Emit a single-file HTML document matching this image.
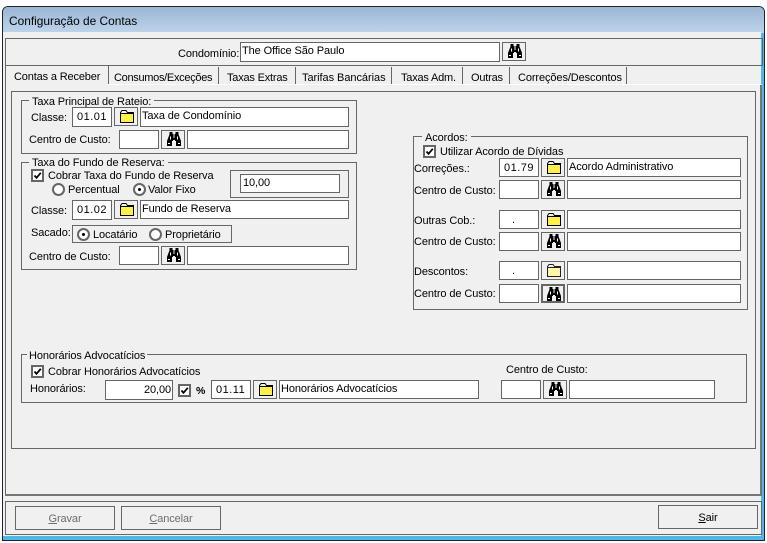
<!DOCTYPE html>
<html lang="pt"><head><meta charset="utf-8"><title>Configuração de Contas</title>
<style>
html,body{margin:0;padding:0;background:#fff;width:767px;height:543px;overflow:hidden}
body{position:relative;font:11px/14px "Liberation Sans",sans-serif;letter-spacing:-.1px;color:#000}
div,span,svg{position:absolute;box-sizing:border-box}
.t{white-space:nowrap;transform:translateY(1px)}
.b{border:1px solid #666}
.i{border:1px solid #666;background:#fff;padding:1px 0 0 1px;white-space:nowrap;line-height:14px}
.n{padding:2px 0 0 4px;letter-spacing:.5px}
.c{border:2px solid #666;background:#fff;width:13px;height:13px}
.c svg{left:0;top:0}
.r{width:13px;height:13px;border-radius:50%;border:2px solid #666;background:#fff}
.r.on:after{content:"";position:absolute;left:3px;top:3px;width:3px;height:3px;background:#000;border-radius:50%}
.btn{border:1px solid #666;background:#f0f0f0;width:24px;height:19px}
.btn svg{left:4px;top:1px}
.g{background:#f0f0f0;padding:0 3px;line-height:12px;white-space:nowrap}
.bt{white-space:nowrap;text-align:center;line-height:24px;border:1px solid #666}
</style></head><body>
<svg width="0" height="0" style="left:0;top:0"><defs>
<symbol id="f" viewBox="0 0 16 14"><path d="M1.5 13.5V3.5L3 1.5H7L8.5 3.5H14.5V13.5Z" fill="#f0f0f0" stroke="#000"/><rect x="2" y="5" width="12" height="8" fill="#ffef4a"/><path d="M2 4.5H14" stroke="#000"/></symbol>
<symbol id="p" viewBox="0 0 16 14"><path d="M1.5 13.5V3.5L3 1.5H7L8.5 3.5H14.5V13.5Z" fill="#f0f0f0" stroke="#222"/><rect x="2" y="5" width="12" height="8" fill="#fff6a8"/><path d="M2 4.5H14" stroke="#222"/></symbol>
<symbol id="k" viewBox="0 0 16 14"><path d="M3.5 0H6.5V2H7.5V6H8.5V2H9.5V0H12.5V2.5L13.5 5L15 9V14H10V9H9V8H7V9H6V14H1V9L2.5 5L3.5 2.5Z" fill="#000"/><path d="M4.5 4.5V7.5M11.5 4.5V7.5" stroke="#fff"/><rect x="2" y="11" width="2" height="1" fill="#fff"/><rect x="12" y="11" width="2" height="1" fill="#fff"/></symbol>
<symbol id="v" viewBox="0 0 9 9"><path d="M1.5 4.5L3.5 6.8L7.8 1.8" fill="none" stroke="#000" stroke-width="1.8"/></symbol>
</defs></svg>

<!-- window -->
<div style="left:2px;top:6px;width:763px;height:535px;border:1px solid #1c2630;border-radius:6px 6px 0 0;background:#f0f0f0;overflow:hidden">
<div style="left:0;top:0;width:761px;height:26px;background:linear-gradient(#9bb6d4,#bdd4ea)"></div>
<div style="left:0;top:26px;width:3px;height:507px;background:#bdd7ec"></div>
<div style="left:758px;top:26px;width:3px;height:507px;background:#4fb8e8"></div>
<div style="left:0;top:529px;width:761px;height:4px;background:#4fb8e8"></div>
</div>
<div style="left:3px;top:32px;width:758px;height:504px;background:#f0f0f0"></div>
<div class="t" style="left:9px;top:13px;font-size:11.9px;letter-spacing:0">Configuração de Contas</div>

<!-- top panel -->
<div style="left:5px;top:38px;width:758px;height:28px;border:1px solid #666"></div>
<div class="t" style="left:178px;top:46px">Condomínio:</div>
<div class="i" style="left:240px;top:42px;width:260px;height:20px">The Office São Paulo</div>
<div class="btn" style="left:502px;top:42px"><svg width="16" height="14"><use href="#k"/></svg></div>

<!-- page frame -->
<div style="left:5px;top:66px;width:1px;height:429px;background:#666"></div>
<div style="left:760px;top:84px;width:2px;height:411px;background:#777"></div>
<div style="left:5px;top:494px;width:757px;height:2px;background:#777"></div>
<div style="left:108px;top:84px;width:654px;height:1px;background:#fff"></div>

<!-- tabs -->
<div class="t" style="left:14px;top:69px;letter-spacing:-.15px">Contas a Receber</div>
<div class="t" style="left:114px;top:70px;letter-spacing:-.3px">Consumos/Exceções</div>
<div class="t" style="left:227px;top:70px;letter-spacing:-.2px">Taxas Extras</div>
<div class="t" style="left:302px;top:70px;letter-spacing:-.05px">Tarifas Bancárias</div>
<div class="t" style="left:401px;top:70px;letter-spacing:-.2px">Taxas Adm.</div>
<div class="t" style="left:471px;top:70px;letter-spacing:-.2px">Outras</div>
<div class="t" style="left:518px;top:70px;letter-spacing:-.1px">Correções/Descontos</div>
<div style="left:108px;top:66px;width:1px;height:18px;background:#666"></div>
<div style="left:218px;top:67px;width:1px;height:17px;background:#666"></div>
<div style="left:295px;top:67px;width:1px;height:17px;background:#666"></div>
<div style="left:391px;top:67px;width:1px;height:17px;background:#666"></div>
<div style="left:462px;top:67px;width:1px;height:17px;background:#666"></div>
<div style="left:509px;top:67px;width:1px;height:17px;background:#666"></div>
<div style="left:626px;top:67px;width:1px;height:17px;background:#666"></div>

<!-- tab content -->
<div class="b" style="left:11px;top:91px;width:745px;height:358px"></div>

<!-- Taxa Principal -->
<div class="b" style="left:21px;top:100px;width:336px;height:54px"></div>
<div class="g" style="left:29px;top:96px">Taxa Principal de Rateio:</div>
<div class="t" style="left:31px;top:110px">Classe:</div>
<div class="i n" style="left:72px;top:107px;width:40px;height:20px">01.01</div>
<div class="btn" style="left:114px;top:107px"><svg width="16" height="14"><use href="#f"/></svg></div>
<div class="i" style="left:140px;top:107px;width:209px;height:20px">Taxa de Condomínio</div>
<div class="t" style="left:29px;top:132px">Centro de Custo:</div>
<div class="i" style="left:119px;top:130px;width:40px;height:19px"></div>
<div class="btn" style="left:161px;top:130px"><svg width="16" height="14"><use href="#k"/></svg></div>
<div class="i" style="left:187px;top:130px;width:162px;height:19px"></div>

<!-- Fundo de Reserva -->
<div class="b" style="left:21px;top:162px;width:336px;height:108px"></div>
<div class="g" style="left:29px;top:157px">Taxa do Fundo de Reserva:</div>
<div class="c" style="left:31px;top:169px"><svg width="9" height="9"><use href="#v"/></svg></div>
<div class="t" style="left:48px;top:168px">Cobrar Taxa do Fundo de Reserva</div>
<div class="r" style="left:52px;top:183px"></div>
<div class="t" style="left:68px;top:182px">Percentual</div>
<div class="r on" style="left:133px;top:183px"></div>
<div class="t" style="left:148px;top:182px">Valor Fixo</div>
<div class="b" style="left:230px;top:170px;width:119px;height:28px"></div>
<div class="i" style="left:240px;top:174px;width:100px;height:19px;padding-left:2px">10,00</div>
<div class="t" style="left:31px;top:203px">Classe:</div>
<div class="i n" style="left:72px;top:200px;width:40px;height:20px">01.02</div>
<div class="btn" style="left:114px;top:200px"><svg width="16" height="14"><use href="#f"/></svg></div>
<div class="i" style="left:140px;top:200px;width:209px;height:19px">Fundo de Reserva</div>
<div class="t" style="left:31px;top:225px">Sacado:</div>
<div class="b" style="left:72px;top:225px;width:160px;height:18px"></div>
<div class="r on" style="left:77px;top:228px"></div>
<div class="t" style="left:93px;top:227px">Locatário</div>
<div class="r" style="left:149px;top:228px"></div>
<div class="t" style="left:165px;top:227px">Proprietário</div>
<div class="t" style="left:29px;top:249px">Centro de Custo:</div>
<div class="i" style="left:119px;top:246px;width:40px;height:19px"></div>
<div class="btn" style="left:161px;top:246px"><svg width="16" height="14"><use href="#k"/></svg></div>
<div class="i" style="left:187px;top:246px;width:162px;height:19px"></div>

<!-- Acordos -->
<div class="b" style="left:413px;top:136px;width:335px;height:174px"></div>
<div class="g" style="left:422px;top:132px">Acordos:</div>
<div class="c" style="left:423px;top:145px"><svg width="9" height="9"><use href="#v"/></svg></div>
<div class="t" style="left:440px;top:144px">Utilizar Acordo de Dívidas</div>

<div class="t" style="left:414px;top:161px">Correções.:</div>
<div class="i n" style="left:499px;top:158px;width:40px;height:19px">01.79</div>
<div class="btn" style="left:541px;top:158px"><svg width="16" height="14"><use href="#f"/></svg></div>
<div class="i" style="left:567px;top:158px;width:174px;height:19px">Acordo Administrativo</div>
<div class="t" style="left:414px;top:183px">Centro de Custo:</div>
<div class="i" style="left:499px;top:180px;width:40px;height:19px"></div>
<div class="btn" style="left:541px;top:180px"><svg width="16" height="14"><use href="#k"/></svg></div>
<div class="i" style="left:567px;top:180px;width:174px;height:19px"></div>

<div class="t" style="left:414px;top:213px">Outras Cob.:</div>
<div class="i" style="left:499px;top:210px;width:40px;height:19px;padding:2px 0 0 9px">&nbsp;.</div>
<div class="btn" style="left:541px;top:210px"><svg width="16" height="14"><use href="#f"/></svg></div>
<div class="i" style="left:567px;top:210px;width:174px;height:19px"></div>
<div class="t" style="left:414px;top:234px">Centro de Custo:</div>
<div class="i" style="left:499px;top:232px;width:40px;height:19px"></div>
<div class="btn" style="left:541px;top:232px"><svg width="16" height="14"><use href="#k"/></svg></div>
<div class="i" style="left:567px;top:232px;width:174px;height:19px"></div>

<div class="t" style="left:414px;top:264px">Descontos:</div>
<div class="i" style="left:499px;top:261px;width:40px;height:19px;padding:2px 0 0 9px">&nbsp;.</div>
<div class="btn" style="left:541px;top:261px"><svg width="16" height="14"><use href="#p"/></svg></div>
<div class="i" style="left:567px;top:261px;width:174px;height:19px"></div>
<div class="t" style="left:414px;top:286px">Centro de Custo:</div>
<div class="i" style="left:499px;top:284px;width:40px;height:19px"></div>
<div class="btn" style="left:541px;top:284px;border:2px solid #666"><svg width="16" height="14" style="left:3px;top:1px"><use href="#k"/></svg></div>
<div class="i" style="left:567px;top:284px;width:174px;height:19px"></div>

<!-- Honorarios -->
<div class="b" style="left:21px;top:354px;width:726px;height:49px"></div>
<div class="g" style="left:27px;top:350px;padding:0 2px">Honorários Advocatícios</div>
<div class="c" style="left:31px;top:365px"><svg width="9" height="9"><use href="#v"/></svg></div>
<div class="t" style="left:48px;top:364px">Cobrar Honorários Advocatícios</div>
<div class="t" style="left:30px;top:381px">Honorários:</div>
<div class="i" style="left:105px;top:380px;width:68px;height:20px;text-align:right;padding:2px 1px 0 0">20,00</div>
<div class="c" style="left:178px;top:384px"><svg width="9" height="9"><use href="#v"/></svg></div>
<div class="t" style="left:196px;top:383px;font-weight:bold;font-size:10.5px">%</div>
<div class="i n" style="left:211px;top:380px;width:40px;height:19px">01.11</div>
<div class="btn" style="left:253px;top:380px"><svg width="16" height="14"><use href="#f"/></svg></div>
<div class="i" style="left:279px;top:380px;width:200px;height:19px">Honorários Advocatícios</div>
<div class="t" style="left:506px;top:362px">Centro de Custo:</div>
<div class="i" style="left:501px;top:380px;width:40px;height:19px"></div>
<div class="btn" style="left:543px;top:380px"><svg width="16" height="14"><use href="#k"/></svg></div>
<div class="i" style="left:569px;top:380px;width:146px;height:19px"></div>

<!-- bottom -->
<div class="b" style="left:5px;top:501px;width:757px;height:34px"></div>
<div class="bt" style="left:15px;top:506px;width:100px;height:24px;color:#6d6d6d"><u>G</u>ravar</div>
<div class="bt" style="left:121px;top:506px;width:100px;height:24px;color:#6d6d6d"><u>C</u>ancelar</div>
<div class="bt" style="left:658px;top:505px;width:100px;height:24px"><u>S</u>air</div>
</body></html>
